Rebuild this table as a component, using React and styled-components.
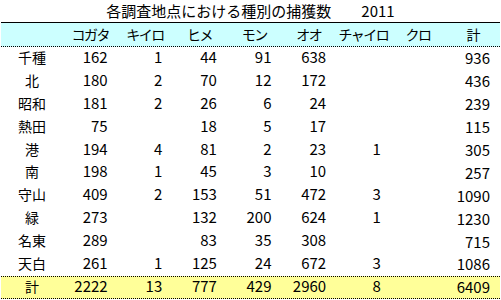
import React from "react";
import styled, { createGlobalStyle } from "styled-components";

const GlobalStyle = createGlobalStyle`
  body {
    margin: 0;
    background: #fff;
    font-family: "Noto Sans CJK JP", "Noto Sans", sans-serif;
    color: #000;
  }
`;

const Sheet = styled.div`
  width: 499px;
  margin-left: 1px;
`;
const Title = styled.div`
  height: 22px;
  line-height: 21px;
  text-align: center;
  font-size: 15px;
  white-space: pre;
  overflow: hidden;
`;
const Row = styled.div`
  display: grid;
  grid-template-columns: 62px repeat(8, 1fr);
  grid-template-rows: 100%;
  height: ${(p) => p.$h || 22.9}px;
  background: ${(p) => p.$bg || "transparent"};
  border-top: ${(p) => p.$top || "none"};
  border-bottom: ${(p) => p.$bottom || "none"};
  box-sizing: border-box;
  line-height: 16px;
  overflow: hidden;
`;
const Head = styled.div`
  display: flex;
  align-items: center;
  justify-content: center;
  font-size: 14px;
  letter-spacing: -1.5px;
  padding-bottom: 1px;
`;
const Name = styled.div`
  display: flex;
  align-items: center;
  justify-content: center;
  font-size: 14px;
  padding-bottom: 3px;
`;
const Num = styled.div`
  display: flex;
  align-items: center;
  justify-content: flex-end;
  padding-right: 10px;
  padding-bottom: 3px;
  padding-top: ${(p) => (p.$low ? 3 : 0)}px;
  font-size: 15px;
`;

const columns = ["コガタ", "キイロ", "ヒメ", "モン", "オオ", "チャイロ", "クロ", "計"];

const rows = [
  ["千種", 162, 1, 44, 91, 638, "", "", 936],
  ["北", 180, 2, 70, 12, 172, "", "", 436],
  ["昭和", 181, 2, 26, 6, 24, "", "", 239],
  ["熱田", 75, "", 18, 5, 17, "", "", 115],
  ["港", 194, 4, 81, 2, 23, 1, "", 305],
  ["南", 198, 1, 45, 3, 10, "", "", 257],
  ["守山", 409, 2, 153, 51, 472, 3, "", 1090],
  ["緑", 273, "", 132, 200, 624, 1, "", 1230],
  ["名東", 289, "", 83, 35, 308, "", "", 715],
  ["天白", 261, 1, 125, 24, 672, 3, "", 1086],
];

const total = ["計", 2222, 13, 777, 429, 2960, 8, "", 6409];

function Cells({ data }) {
  const [name, ...nums] = data;
  return (
    <>
      <Name>{name}</Name>
      {nums.map((n, i) => (
        <Num key={i} $low={i === nums.length - 1}>
          {n}
        </Num>
      ))}
    </>
  );
}

export default function App() {
  return (
    <>
      <GlobalStyle />
      <Sheet>
        <Title>{"各調査地点における種別の捕獲数　　2011"}</Title>
        <Row $bg="#ccffff" $top="1px solid #000" $bottom="1px dotted #000" $h={25}>
          <Head />
          {columns.map((c) => (
            <Head key={c}>{c}</Head>
          ))}
        </Row>
        {rows.map((r) => (
          <Row key={r[0]}>
            <Cells data={r} />
          </Row>
        ))}
        <Row $bg="#ffff99" $top="1px dotted #000" $bottom="1px dotted #000" $h={23}>
          <Cells data={total} />
        </Row>
      </Sheet>
    </>
  );
}
